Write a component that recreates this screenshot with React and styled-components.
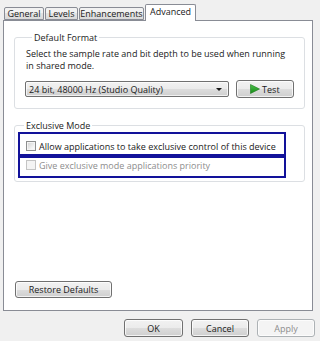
import React from 'react';
import styled, { createGlobalStyle } from 'styled-components';

const GlobalStyle = createGlobalStyle`
    html, body {
        margin: 0;
        padding: 0;
        background: #f0f0f0;
    }
    body {
        font-family: 'Open Sans', 'Noto Sans', Arial, sans-serif;
        font-size: 9px;
        color: #1a1a1a;
    }
    * {
        box-sizing: border-box;
    }
`;

const Window = styled.div`
    width: 320px;
    height: 341px;
    display: flex;
    flex-direction: column;
    background: #f0f0f0;
    overflow: hidden;
`;

const TabRow = styled.div`
    display: flex;
    align-items: flex-end;
    height: 16px;
    margin-top: 4px;
    padding-left: 4px;
`;

const Tab = styled.div`
    width: ${props => props.width}px;
    height: ${props => props.active ? 17 : 13}px;
    margin-right: ${props => props.active ? 0 : 1}px;
    margin-bottom: ${props => props.active ? -1 : 0}px;
    position: relative;
    z-index: ${props => props.active ? 1 : 0};
    display: flex;
    align-items: center;
    justify-content: center;
    padding-bottom: ${props => props.active ? 3 : 0}px;
    border: 1px solid #898c95;
    border-bottom: ${props => props.active ? 'none' : '1px solid #898c95'};
    border-radius: 2px 2px 0 0;
    background: ${props => props.active
        ? '#ffffff'
        : 'linear-gradient(#f2f2f2, #f2f2f2 50%, #e3e3e3 50%, #dadada)'};
    white-space: nowrap;
`;

const Panel = styled.div`
    height: 291px;
    margin: 0 7px 0 3px;
    padding: 10px 7px 12px 10px;
    display: flex;
    flex-direction: column;
    background: #ffffff;
    border: 1px solid #898c95;
`;

const Group = styled.fieldset`
    margin: 0;
    margin-top: ${props => props.first ? 0 : 10}px;
    padding: ${props => props.padding};
    border: 1px solid #dcdfe3;
    border-radius: 3px;
    min-width: 0;
`;

const Legend = styled.legend`
    margin-left: 6px;
    padding: 0 2px;
    line-height: 13px;
`;

const Description = styled.div`
    padding-top: 4px;
    line-height: 12px;
    white-space: nowrap;
`;

const FormatRow = styled.div`
    display: flex;
    align-items: center;
    height: 18px;
    margin-top: 8px;
    margin-left: -1px;
    gap: 7px;
`;

const Select = styled.div`
    width: 206px;
    height: 16px;
    display: flex;
    align-items: center;
    justify-content: space-between;
    padding: 0 6px 0 3px;
    border: 1px solid #707070;
    border-radius: 2px;
    background: linear-gradient(#f2f2f2, #ebebeb 50%, #dddddd 50%, #cfcfcf);
    box-shadow: inset 0 0 0 1px rgba(255, 255, 255, 0.7);
    white-space: nowrap;
`;

const Arrow = styled.span`
    width: 0;
    height: 0;
    border-left: 3px solid transparent;
    border-right: 3px solid transparent;
    border-top: 3px solid #1a1a1a;
`;

const Button = styled.div`
    width: ${props => props.width}px;
    height: ${props => props.height || 18}px;
    display: flex;
    align-items: center;
    justify-content: center;
    gap: 2px;
    border: 1px solid ${props => props.disabled ? '#adb2b5' : '#707070'};
    border-radius: 3px;
    background: ${props => props.disabled
        ? '#f4f4f4'
        : 'linear-gradient(#f2f2f2, #ebebeb 50%, #dddddd 50%, #cfcfcf)'};
    box-shadow: inset 0 0 0 1px rgba(255, 255, 255, 0.75);
    color: ${props => props.disabled ? '#8d8d8d' : '#1a1a1a'};
    white-space: nowrap;
`;

const CheckRow = styled.div`
    width: 268px;
    height: ${props => props.height}px;
    display: flex;
    align-items: center;
    gap: 3px;
    padding: ${props => props.padding};
    border: 2px solid #12129a;
    color: ${props => props.disabled ? '#8d8d8d' : '#1a1a1a'};
    white-space: nowrap;
`;

const Box = styled.span`
    width: 10px;
    height: 10px;
    flex-shrink: 0;
    border: 1px solid ${props => props.disabled ? '#c4c4c4' : '#8e8f8f'};
    background: ${props => props.disabled
        ? '#f4f4f4'
        : 'linear-gradient(135deg, #cfcfcf, #f4f4f4 70%, #ffffff)'};
    box-shadow: inset 0 0 0 1px #f4f4f4;
`;

const Spacer = styled.div`
    flex: 1;
`;

const RestoreRow = styled.div`
    margin-left: 1px;
`;

const Footer = styled.div`
    display: flex;
    justify-content: flex-end;
    gap: 8px;
    margin-top: 8px;
    padding-right: 5px;
`;

const PlayIcon = () => (
    <svg width="10" height="10" viewBox="0 0 10 10">
        <defs>
            <linearGradient id="play" x1="0" y1="0" x2="0" y2="1">
                <stop offset="0" stopColor="#4cc24c" />
                <stop offset="1" stopColor="#178a17" />
            </linearGradient>
        </defs>
        <polygon points="0.5,0.5 9.5,5 0.5,9.5" fill="url(#play)" stroke="#1d7a1d" strokeWidth="0.6" />
    </svg>
);

const tabs = [
    { name: 'General', width: 40 },
    { name: 'Levels', width: 33 },
    { name: 'Enhancements', width: 65 },
    { name: 'Advanced', width: 51, active: true }
];

const App = () => (
    <Window>
        <GlobalStyle />
        <TabRow>
            {tabs.map(tab => (
                <Tab key={tab.name} width={tab.width} active={tab.active}>{tab.name}</Tab>
            ))}
        </TabRow>
        <Panel>
            <Group first padding='0 10px 10px 11px'>
                <Legend>Default Format</Legend>
                <Description>
                    Select the sample rate and bit depth to be used when running
                    <br />
                    in shared mode.
                </Description>
                <FormatRow>
                    <Select>
                        24 bit, 48000 Hz (Studio Quality)
                        <Arrow />
                    </Select>
                    <Button width={59}>
                        <PlayIcon />
                        Test
                    </Button>
                </FormatRow>
            </Group>
            <Group padding='0 10px 3px 3px'>
                <Legend>Exclusive Mode</Legend>
                <CheckRow height={24} padding='4px 0 0 6px'>
                    <Box />
                    Allow applications to take exclusive control of this device
                </CheckRow>
                <CheckRow height={22} padding='0 0 4px 6px' disabled>
                    <Box disabled />
                    Give exclusive mode applications priority
                </CheckRow>
            </Group>
            <Spacer />
            <RestoreRow>
                <Button width={97} height={17}>Restore Defaults</Button>
            </RestoreRow>
        </Panel>
        <Footer>
            <Button width={59}>OK</Button>
            <Button width={58}>Cancel</Button>
            <Button width={58} disabled>Apply</Button>
        </Footer>
    </Window>
);

export default App;
